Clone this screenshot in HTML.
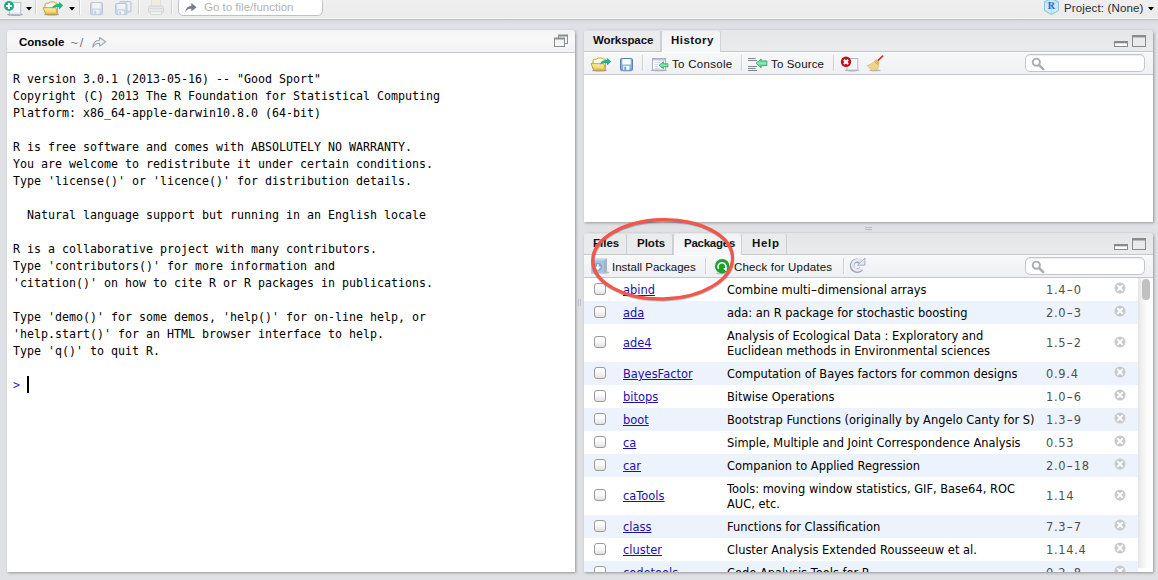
<!DOCTYPE html>
<html><head><meta charset="utf-8">
<style>
*{box-sizing:border-box;margin:0;padding:0}
html,body{width:1158px;height:580px;overflow:hidden}
body{background:#e0e1e4;font-family:"Liberation Sans","DejaVu Sans",sans-serif;font-size:11.5px;color:#000;position:relative}
.abs{position:absolute}
#topbar{left:0;top:0;width:1158px;height:20px;background:linear-gradient(#efeff0,#ebebec);border-bottom:1px solid #bfc0c3}
#topbar:after{content:"";position:absolute;left:0;top:18px;width:100%;height:1px;background:#f6f6f7}
#topshadow{left:0;top:20px;width:1158px;height:5px;background:linear-gradient(#d7d8dc,#e0e1e4)}
.panel{background:#fff;border-radius:4px 4px 0 0;box-shadow:1px 1px 3px rgba(0,0,0,.34)}
.hdr{left:0;top:0;width:100%;background:linear-gradient(#f3f3f5,#f8f8f9 45%,#f1f2f4);border-bottom:1px solid #c4c8cc;border-radius:4px 4px 0 0}
.tabbar{left:0;top:0;width:100%;height:22px;background:linear-gradient(#e5e6e8,#eaebed);border-bottom:1px solid #c4c8cc;border-radius:4px 4px 0 0}
.tab{top:0;height:21px;font-weight:bold;font-size:11.5px;line-height:18px;border-right:1px solid #cdced2;border-top:1px solid #dfe0e3;background:#eaebed;color:#111;border-radius:3px 3px 0 0;white-space:nowrap}
.tab.first{border-radius:4px 3px 0 0}
.tab.sel{background:linear-gradient(#f2f3f5,#f7f8f9);height:23px;border-right:1px solid #cfd2d6;border-left:1px solid #cfd2d6;border-top:1px solid #e6e7ea}
.tbar{left:0;width:100%;height:23px;box-shadow:inset 0 1px 0 #fcfcfd;background:linear-gradient(#f7f8f9,#eff0f3);border-bottom:1px solid #c4c8cc;white-space:nowrap}
.tl{position:absolute;top:5px;line-height:15px;font-size:11.5px;color:#111;white-space:nowrap}
.sep{position:absolute;top:3px;width:1px;height:16px;background:#cfd1d5;box-shadow:1px 0 0 #fafafa}
.search{position:absolute;width:120px;height:18px;border:1px solid #c2c6cb;border-radius:5px;background:#fff;box-shadow:inset 0 1px 1px rgba(0,0,0,.08)}
pre{font-family:"DejaVu Sans Mono","Liberation Mono",monospace;font-size:11.63px;line-height:17px;color:#000}
.list{left:0;top:0;width:554px;height:339px;overflow:hidden;font-family:"DejaVu Sans","Liberation Sans",sans-serif;font-size:11.45px}
.row{left:0;width:554px}
.row.alt{background:#edf3fc}
.row a{color:#1d0fb0;text-decoration:underline;position:absolute;left:39px;line-height:15px}
.row .d{position:absolute;left:143px;width:330px;line-height:15px;white-space:nowrap}
.row .v{position:absolute;left:462px;color:#4f4f4f;line-height:15px;letter-spacing:.7px}
.cb{position:absolute;left:10px;width:12px;height:12px;border:1px solid #9a9a9a;border-radius:3px;background:linear-gradient(#fff 30%,#e2e2e2)}
.x{position:absolute;left:530px}
.h{display:inline-block;transform:scaleX(1.6);margin:0 1.3px}
</style></head><body>
<svg width="0" height="0" style="position:absolute"><defs>
<linearGradient id="gfold" x1="0" y1="0" x2="0" y2="1"><stop offset="0" stop-color="#fdf0b8"/><stop offset="1" stop-color="#e9c452"/></linearGradient>
<linearGradient id="gpage" x1="0" y1="0" x2="1" y2="1"><stop offset="0" stop-color="#fff"/><stop offset="1" stop-color="#eef1f8"/></linearGradient>
<linearGradient id="ggreen" x1="0" y1="0" x2="0" y2="1"><stop offset="0" stop-color="#3fc784"/><stop offset=".5" stop-color="#8eeab8"/><stop offset="1" stop-color="#2fbf76"/></linearGradient>
</defs></svg>

<div id="topbar" class="abs"></div>
<div id="topshadow" class="abs"></div>

<!-- top toolbar icons -->
<svg class="abs" style="left:2px;top:0" width="22" height="17" viewBox="0 0 22 17">
<ellipse cx="13" cy="14.6" rx="8" ry="1.2" fill="#4a5568" opacity=".55"/>
<rect x="7.5" y="2.500" width="11.300" height="11.700" fill="url(#gpage)" stroke="#b9c1d1"/>
<circle cx="7" cy="6" r="5" fill="#1fae84"/>
<path d="M7 3v6M4 6h6" stroke="#fff" stroke-width="2"/>
</svg>
<svg class="abs" style="left:26px;top:7px" width="6" height="4" viewBox="0 0 6 4"><path d="M0 0h6L3 3.5z" fill="#000"/></svg>
<div class="sep" style="left:35px;top:0;height:15px"></div>
<svg class="abs" style="left:42px;top:1px" width="22" height="15" viewBox="0 0 22 15">
<ellipse cx="9.5" cy="13.4" rx="7.5" ry="1.2" fill="#4a5262" opacity=".5"/>
<path d="M3 12V3.2l1.6-1h2.2l1-1.2h4.6l.8 1.2h2.2v9.8z" fill="#fffdf2" stroke="#c9a42c" stroke-width="1" stroke-linejoin="round"/>
<path d="M1 6.7h12.9l1.6 6.4H3.9z" fill="url(#gfold)" stroke="#c9a42c" stroke-width="1" stroke-linejoin="round"/>
<path d="M10.4 6.2c1.2-2.2 3-3.2 6.6-3.2V.8l4.2 3.8L17 8.4V6.1c-2.6-.1-4.4.1-6.6 1.3z" fill="#1fb387"/>
</svg>
<svg class="abs" style="left:69px;top:7px" width="6" height="4" viewBox="0 0 6 4"><path d="M0 0h6L3 3.5z" fill="#000"/></svg>
<div class="sep" style="left:79px;top:0;height:15px"></div>
<svg class="abs" style="left:90px;top:2px;opacity:.34" width="14" height="14" viewBox="0 0 14 14">
<ellipse cx="6.5" cy="12.6" rx="7" ry=".8" fill="#4a5262" opacity=".35"/>
<rect x="0.5" y="0.5" width="12" height="11.6" rx="1.2" fill="#7eb1e8" stroke="#5a7faf"/>
<rect x="2.3" y="1.1" width="8.4" height="5.4" fill="#fff"/>
<rect x="3.2" y="7.8" width="6.2" height="4" fill="#fff"/>
<rect x="4.3" y="8.8" width="1.9" height="3" fill="#5e9be0"/>
</svg>
<svg class="abs" style="left:115px;top:1px;opacity:.34" width="17" height="15" viewBox="0 0 17 15">
<rect x="4.5" y="0.5" width="11.5" height="10.6" rx="1.2" fill="#9cc6ee" stroke="#5a7faf"/>
<rect x="12" y="1.4" width="2.6" height="8" fill="#fff"/>
<rect x="0.5" y="2.5" width="11.5" height="11" rx="1.2" fill="#7eb1e8" stroke="#5a7faf"/>
<rect x="2.2" y="3.1" width="8" height="5" fill="#fff"/>
<rect x="3" y="9.6" width="6" height="3.8" fill="#fff"/>
<rect x="4.1" y="10.5" width="1.8" height="2.9" fill="#5e9be0"/>
</svg>
<div class="sep" style="left:138px;top:0;height:15px"></div>
<svg class="abs" style="left:147px;top:0;opacity:.5" width="18" height="16" viewBox="0 0 18 16">
<rect x="4.5" y="-1" width="9" height="8" fill="#f2ead2" stroke="#ddd3b8"/>
<rect x="1.5" y="6" width="15" height="6.5" rx="1.5" fill="#dfe2e6" stroke="#bcc1c8"/>
<path d="M2.5 8.5h13" stroke="#c3c7cd"/>
<rect x="3.5" y="11.5" width="11" height="3" fill="#f4f5f6" stroke="#c6cad0"/>
</svg>
<div class="sep" style="left:171px;top:0;height:15px"></div>
<div class="abs" style="left:178px;top:-3px;width:145px;height:19px;border:1px solid #bfc1c5;border-radius:5px;background:#fff"></div>
<svg class="abs" style="left:185px;top:2px" width="12" height="11" viewBox="0 0 12 11"><path d="M0.3 10.2C0.8 6 3 4 6.3 4V1L11.6 5.3 6.3 9.6V6.8C3.6 6.6 1.8 7.6.3 10.2z" fill="#7b7e8b"/></svg>
<div class="abs" style="left:204px;top:0;font-size:11.5px;line-height:15px;color:#b3b3b3;white-space:nowrap">Go to file/function</div>

<svg class="abs" style="left:1043px;top:-2px" width="17" height="18" viewBox="0 0 17 18">
<path d="M8.5 1L15.5 3.6V12.6L8.5 16.5 1.5 12.6V3.6z" fill="#cdebf4" stroke="#7ac7dc" stroke-width="1"/>
<path d="M1.5 3.6L8.5 6.4 15.5 3.6M8.5 6.4V16.5" fill="none" stroke="#9fd6e6" stroke-width=".8"/>
<text x="8.3" y="11.2" font-family="Liberation Serif,serif" font-weight="bold" font-size="10" text-anchor="middle" fill="#2b68c9">R</text>
</svg>
<div class="abs" style="left:1064px;top:1px;font-size:11.5px;line-height:15px;color:#2b2b2b;white-space:nowrap;letter-spacing:.15px">Project: (None)</div>
<svg class="abs" style="left:1148px;top:7px" width="6" height="4" viewBox="0 0 6 4"><path d="M0 0h6L3 3.5z" fill="#000"/></svg>

<!-- Console -->
<div class="abs panel" id="console" style="left:7px;top:30px;width:568px;height:542px">
  <div class="abs hdr" style="height:23px"></div>
  <div class="abs" style="left:12px;top:4px;font-weight:bold;font-size:11.5px;line-height:16px">Console</div>
  <div class="abs" style="left:63.500px;top:5px;font-size:13px;line-height:16px;color:#7a7a7a;letter-spacing:1.600px">~/</div>
  <svg class="abs" style="left:85px;top:7px" width="15" height="11" viewBox="0 0 15 11"><path d="M0.800 10.200C1 6 3.400 3.500 7.600 3.300V.5l6.100 4.300-6.100 4.300V6.300C4.600 6.300 2.400 7.400.8 10.200z" fill="#eef1f6" stroke="#a0a6b5" stroke-width="1.100" stroke-linejoin="round"/></svg>
  <svg class="abs" style="left:546px;top:4px" width="16" height="14" viewBox="0 0 16 14">
   <rect x="5.5" y="1.5" width="9" height="8" fill="#f4f5f6" stroke="#8d8d8d"/><path d="M5 1.5h10" stroke="#8d8d8d" stroke-width="2"/>
   <rect x="1.5" y="4.5" width="10" height="8" fill="#f4f5f6" stroke="#8d8d8d"/><path d="M1 4.5h11" stroke="#8d8d8d" stroke-width="2"/>
  </svg>
<pre class="abs" style="left:6px;top:41px">R version 3.0.1 (2013-05-16) -- "Good Sport"
Copyright (C) 2013 The R Foundation for Statistical Computing
Platform: x86_64-apple-darwin10.8.0 (64-bit)

R is free software and comes with ABSOLUTELY NO WARRANTY.
You are welcome to redistribute it under certain conditions.
Type 'license()' or 'licence()' for distribution details.

  Natural language support but running in an English locale

R is a collaborative project with many contributors.
Type 'contributors()' for more information and
'citation()' on how to cite R or R packages in publications.

Type 'demo()' for some demos, 'help()' for on-line help, or
'help.start()' for an HTML browser interface to help.
Type 'q()' to quit R.

<span style="color:#2a2aee">&gt;</span> </pre>
  <div class="abs" style="left:20px;top:346px;width:2px;height:17px;background:#000"></div>
</div>

<!-- Top right -->
<div class="abs panel" id="tr" style="left:584px;top:30px;width:569px;height:192px">
  <div class="abs tabbar"></div>
  <div class="abs tab first" style="left:0;width:77px;padding-left:9px;letter-spacing:-.1px">Workspace</div>
  <div class="abs tab sel" style="left:77px;width:60px;padding-left:9px;letter-spacing:.45px">History</div>
  <svg class="abs" style="left:530px;top:5px" width="33" height="13" viewBox="0 0 33 13">
   <rect x="0.500" y="6.500" width="13" height="5" fill="#fff" stroke="#8a8a8a"/><rect x="0" y="6" width="14" height="2.300" fill="#8a8a8a"/>
   <rect x="18.5" y="1" width="13" height="10.5" fill="#e9eaec" stroke="#8a8a8a"/><path d="M18 1.2h14" stroke="#8a8a8a" stroke-width="2.4"/>
  </svg>
  <div class="abs tbar" style="top:22px">
   <svg class="abs" style="left:6px;top:5px" width="22" height="15" viewBox="0 0 22 15">
<ellipse cx="9.5" cy="13.4" rx="7.5" ry="1.2" fill="#4a5262" opacity=".5"/>
<path d="M3 12V3.2l1.6-1h2.2l1-1.2h4.6l.8 1.2h2.2v9.8z" fill="#fffdf2" stroke="#c9a42c" stroke-width="1" stroke-linejoin="round"/>
<path d="M1 6.7h12.9l1.6 6.4H3.9z" fill="url(#gfold)" stroke="#c9a42c" stroke-width="1" stroke-linejoin="round"/>
<path d="M10.4 6.2c1.2-2.2 3-3.2 6.6-3.2V.8l4.2 3.8L17 8.4V6.1c-2.6-.1-4.4.1-6.6 1.3z" fill="#1fb387"/>
</svg>
   <svg class="abs" style="left:36px;top:6px;opacity:1" width="14" height="14" viewBox="0 0 14 14">
<ellipse cx="6.5" cy="12.6" rx="7" ry=".8" fill="#4a5262" opacity=".35"/>
<rect x="0.5" y="0.5" width="12" height="11.6" rx="1.2" fill="#7eb1e8" stroke="#5a7faf"/>
<rect x="2.3" y="1.1" width="8.4" height="5.4" fill="#fff"/>
<rect x="3.2" y="7.8" width="6.2" height="4" fill="#fff"/>
<rect x="4.3" y="8.8" width="1.9" height="3" fill="#5e9be0"/>
</svg>
   <div class="sep" style="left:58px"></div>
   <svg class="abs" style="left:67px;top:5px" width="18" height="15" viewBox="0 0 18 15">
    <ellipse cx="8" cy="13.4" rx="8.5" ry=".9" fill="#4a5262" opacity=".4"/>
    <rect x="1.5" y="1.5" width="13" height="11.5" fill="#fff" stroke="#a5aec2"/><rect x="2" y="2" width="12" height="1.7" fill="#c3cbdb"/>
    <path d="M3.5 5.5h5.5M3.5 7.5h3.5M3.5 9.5h3.5M3.5 11.5h5.5" stroke="#d3d9e3"/>
    <path d="M8 8.3L12.4 4.9V6.8H16.9V9.8H12.4V11.7z" fill="url(#ggreen)" stroke="#23a55e" stroke-width=".8" stroke-linejoin="round"/>
   </svg>
   <div class="tl" style="left:88px;letter-spacing:.3px">To Console</div>
   <div class="sep" style="left:157px"></div>
   <svg class="abs" style="left:163px;top:5px" width="21" height="15" viewBox="0 0 21 15">
    <path d="M1 1.5h7.5M1 3.5h9M1 9.5h9M1 11.5h7.5M1 13.5h9" stroke="#7d8492" stroke-width="1"/>
    <path d="M9 6.2L14.2 2V3.9H19.9V8.6H14.2V10.7z" fill="url(#ggreen)" stroke="#23a55e" stroke-width=".8" stroke-linejoin="round"/>
   </svg>
   <div class="tl" style="left:187px;letter-spacing:.15px">To Source</div>
   <div class="sep" style="left:249px"></div>
   <svg class="abs" style="left:256px;top:4px" width="20" height="16" viewBox="0 0 20 16">
    <ellipse cx="12" cy="14.4" rx="7" ry="1" fill="#4a5568" opacity=".5"/>
    <rect x="7" y="2.5" width="10.8" height="11.6" fill="url(#gpage)" stroke="#b4bccb"/>
    <circle cx="6" cy="5.8" r="5.2" fill="#b9141b"/>
    <path d="M3.9 3.7l4.2 4.2M8.1 3.7L3.9 7.9" stroke="#fff" stroke-width="2.1"/>
   </svg>
   <svg class="abs" style="left:282px;top:3px" width="18" height="17" viewBox="0 0 18 17">
    <ellipse cx="9" cy="15.3" rx="6" ry=".9" fill="#4a5262" opacity=".4"/>
    <path d="M16.6 1.2L11.6 5.8" stroke="#c0392b" stroke-width="1.8" stroke-linecap="round"/>
    <path d="M10.4 4.4l2.6 2.4c.1 2.2-.4 4.8-1 6.4-.8 1.2-3.6 2.6-5.2 2.2C4.600 14 2.400 12 1.200 10.600 4.600 9.400 8.200 7.200 10.400 4.400z" fill="#ecd68c" stroke="#d2b45c" stroke-width=".6"/>
    <path d="M8.600 6.400l3.400 3.200M9.600 5.400l3.200 3" stroke="#c98f3a" stroke-width=".9"/>
   </svg>
   <div class="search" style="left:441px;top:2px"></div>
   <svg class="abs" style="left:447px;top:5px" width="14" height="14" viewBox="0 0 14 14"><circle cx="5.300" cy="5.200" r="3.600" fill="none" stroke="#a7afb5" stroke-width="1.900"/><path d="M8 8l4.200 4.200" stroke="#a7afb5" stroke-width="2.500" stroke-linecap="round"/></svg>
  </div>
</div>

<!-- Bottom right -->
<div class="abs panel" id="br" style="left:584px;top:233px;width:569px;height:339px;overflow:hidden">
  <div class="abs list">
<div class="abs row" style="top:45px;height:23px">
<span class="cb" style="top:5px"></span><a style="top:5px">abind</a><span class="d" style="top:5px">Combine multi<span class="h">-</span>dimensional arrays</span><span class="v" style="top:5px">1.4<span class="h">-</span>0</span><svg class="x" style="top:4px" width="12" height="12" viewBox="0 0 12 12"><circle cx="6" cy="6" r="5.500" fill="#c6cacd"/><path d="M3.700 3.700L8.300 8.300M8.300 3.700L3.700 8.300" stroke="#fff" stroke-width="1.800" stroke-linecap="round"/></svg>
</div>
<div class="abs row alt" style="top:68px;height:23px">
<span class="cb" style="top:5px"></span><a style="top:5px">ada</a><span class="d" style="top:5px">ada: an R package for stochastic boosting</span><span class="v" style="top:5px">2.0<span class="h">-</span>3</span><svg class="x" style="top:4px" width="12" height="12" viewBox="0 0 12 12"><circle cx="6" cy="6" r="5.500" fill="#c6cacd"/><path d="M3.700 3.700L8.300 8.300M8.300 3.700L3.700 8.300" stroke="#fff" stroke-width="1.800" stroke-linecap="round"/></svg>
</div>
<div class="abs row" style="top:91px;height:38px">
<span class="cb" style="top:12px"></span><a style="top:12px">ade4</a><span class="d" style="top:5px">Analysis of Ecological Data : Exploratory and<br>Euclidean methods in Environmental sciences</span><span class="v" style="top:12px">1.5<span class="h">-</span>2</span><svg class="x" style="top:12px" width="12" height="12" viewBox="0 0 12 12"><circle cx="6" cy="6" r="5.500" fill="#c6cacd"/><path d="M3.700 3.700L8.300 8.300M8.300 3.700L3.700 8.300" stroke="#fff" stroke-width="1.800" stroke-linecap="round"/></svg>
</div>
<div class="abs row alt" style="top:129px;height:23px">
<span class="cb" style="top:5px"></span><a style="top:5px">BayesFactor</a><span class="d" style="top:5px">Computation of Bayes factors for common designs</span><span class="v" style="top:5px">0.9.4</span><svg class="x" style="top:4px" width="12" height="12" viewBox="0 0 12 12"><circle cx="6" cy="6" r="5.500" fill="#c6cacd"/><path d="M3.700 3.700L8.300 8.300M8.300 3.700L3.700 8.300" stroke="#fff" stroke-width="1.800" stroke-linecap="round"/></svg>
</div>
<div class="abs row" style="top:152px;height:23px">
<span class="cb" style="top:5px"></span><a style="top:5px">bitops</a><span class="d" style="top:5px">Bitwise Operations</span><span class="v" style="top:5px">1.0<span class="h">-</span>6</span><svg class="x" style="top:4px" width="12" height="12" viewBox="0 0 12 12"><circle cx="6" cy="6" r="5.500" fill="#c6cacd"/><path d="M3.700 3.700L8.300 8.300M8.300 3.700L3.700 8.300" stroke="#fff" stroke-width="1.800" stroke-linecap="round"/></svg>
</div>
<div class="abs row alt" style="top:175px;height:23px">
<span class="cb" style="top:5px"></span><a style="top:5px">boot</a><span class="d" style="top:5px">Bootstrap Functions (originally by Angelo Canty for S)</span><span class="v" style="top:5px">1.3<span class="h">-</span>9</span><svg class="x" style="top:4px" width="12" height="12" viewBox="0 0 12 12"><circle cx="6" cy="6" r="5.500" fill="#c6cacd"/><path d="M3.700 3.700L8.300 8.300M8.300 3.700L3.700 8.300" stroke="#fff" stroke-width="1.800" stroke-linecap="round"/></svg>
</div>
<div class="abs row" style="top:198px;height:23px">
<span class="cb" style="top:5px"></span><a style="top:5px">ca</a><span class="d" style="top:5px">Simple, Multiple and Joint Correspondence Analysis</span><span class="v" style="top:5px">0.53</span><svg class="x" style="top:4px" width="12" height="12" viewBox="0 0 12 12"><circle cx="6" cy="6" r="5.500" fill="#c6cacd"/><path d="M3.700 3.700L8.300 8.300M8.300 3.700L3.700 8.300" stroke="#fff" stroke-width="1.800" stroke-linecap="round"/></svg>
</div>
<div class="abs row alt" style="top:221px;height:23px">
<span class="cb" style="top:5px"></span><a style="top:5px">car</a><span class="d" style="top:5px">Companion to Applied Regression</span><span class="v" style="top:5px">2.0<span class="h">-</span>18</span><svg class="x" style="top:4px" width="12" height="12" viewBox="0 0 12 12"><circle cx="6" cy="6" r="5.500" fill="#c6cacd"/><path d="M3.700 3.700L8.300 8.300M8.300 3.700L3.700 8.300" stroke="#fff" stroke-width="1.800" stroke-linecap="round"/></svg>
</div>
<div class="abs row" style="top:244px;height:38px">
<span class="cb" style="top:12px"></span><a style="top:12px">caTools</a><span class="d" style="top:5px">Tools: moving window statistics, GIF, Base64, ROC<br>AUC, etc.</span><span class="v" style="top:12px">1.14</span><svg class="x" style="top:12px" width="12" height="12" viewBox="0 0 12 12"><circle cx="6" cy="6" r="5.500" fill="#c6cacd"/><path d="M3.700 3.700L8.300 8.300M8.300 3.700L3.700 8.300" stroke="#fff" stroke-width="1.800" stroke-linecap="round"/></svg>
</div>
<div class="abs row alt" style="top:282px;height:23px">
<span class="cb" style="top:5px"></span><a style="top:5px">class</a><span class="d" style="top:5px">Functions for Classification</span><span class="v" style="top:5px">7.3<span class="h">-</span>7</span><svg class="x" style="top:4px" width="12" height="12" viewBox="0 0 12 12"><circle cx="6" cy="6" r="5.500" fill="#c6cacd"/><path d="M3.700 3.700L8.300 8.300M8.300 3.700L3.700 8.300" stroke="#fff" stroke-width="1.800" stroke-linecap="round"/></svg>
</div>
<div class="abs row" style="top:305px;height:23px">
<span class="cb" style="top:5px"></span><a style="top:5px">cluster</a><span class="d" style="top:5px">Cluster Analysis Extended Rousseeuw et al.</span><span class="v" style="top:5px">1.14.4</span><svg class="x" style="top:4px" width="12" height="12" viewBox="0 0 12 12"><circle cx="6" cy="6" r="5.500" fill="#c6cacd"/><path d="M3.700 3.700L8.300 8.300M8.300 3.700L3.700 8.300" stroke="#fff" stroke-width="1.800" stroke-linecap="round"/></svg>
</div>
<div class="abs row alt" style="top:328px;height:23px">
<span class="cb" style="top:5px"></span><a style="top:5px">codetools</a><span class="d" style="top:5px">Code Analysis Tools for R</span><span class="v" style="top:5px">0.2<span class="h">-</span>8</span><svg class="x" style="top:4px" width="12" height="12" viewBox="0 0 12 12"><circle cx="6" cy="6" r="5.500" fill="#c6cacd"/><path d="M3.700 3.700L8.300 8.300M8.300 3.700L3.700 8.300" stroke="#fff" stroke-width="1.800" stroke-linecap="round"/></svg>
</div>
  </div>
  <div class="abs" style="left:554px;top:45px;width:15px;height:290px;background:linear-gradient(90deg,#e4e4e4,#f1f1f1 25%,#fbfbfb 60%,#fff)"></div>
  <div class="abs" style="left:558px;top:46px;width:8px;height:21px;border-radius:4px;background:#c1c1c1"></div>
  <div class="abs tabbar"></div>
  <div class="abs tab first" style="left:0;width:43px;padding-left:9px">Files</div>
  <div class="abs tab" style="left:43px;width:46px;padding-left:10px">Plots</div>
  <div class="abs tab sel" style="left:89px;width:69px;padding-left:10px;letter-spacing:-.25px">Packages</div>
  <div class="abs tab" style="left:158px;width:45px;padding-left:10px;letter-spacing:.7px">Help</div>
  <svg class="abs" style="left:530px;top:5px" width="33" height="13" viewBox="0 0 33 13">
   <rect x="0.500" y="6.500" width="13" height="5" fill="#fff" stroke="#8a8a8a"/><rect x="0" y="6" width="14" height="2.300" fill="#8a8a8a"/>
   <rect x="18.5" y="1" width="13" height="10.5" fill="#e9eaec" stroke="#8a8a8a"/><path d="M18 1.2h14" stroke="#8a8a8a" stroke-width="2.4"/>
  </svg>
  <div class="abs tbar" style="top:22px">
   <svg class="abs" style="left:6px;top:2px" width="19" height="18" viewBox="0 0 19 18">
    <ellipse cx="15" cy="15.600" rx="4" ry="1" fill="#4a5262" opacity=".35"/>
    <path d="M1.200 3.400L4.200 1.300h12.700v13.200L14 16.600H1.200z" fill="#c9d8ea"/>
    <path d="M14 3.400L16.900 1.300v13.200L14 16.600z" fill="#9db4d1"/>
    <path d="M1.200 3.400h12.800V16.600H1.200z" fill="#abc1dc"/>
    <circle cx="7.900" cy="9.900" r="4.200" fill="#8ba5c6"/><path d="M7.900 7.200v4.600M5.700 9.800l2.200 2.400 2.200-2.400" stroke="#fff" stroke-width="1.500" fill="none"/>
   </svg>
   <div class="tl" style="left:28px">Install Packages</div>
   <div class="sep" style="left:121px"></div>
   <svg class="abs" style="left:130px;top:3px" width="17" height="17" viewBox="0 0 17 17">
    <ellipse cx="7" cy="15.3" rx="5" ry=".9" fill="#4a5262" opacity=".35"/>
    <circle cx="8.2" cy="8.200" r="7.25" fill="#18a52c"/>
    <path d="M4.6 10.800A4 4 0 1 1 11.800 10" fill="none" stroke="#fff" stroke-width="1.5"/><path d="M9.200 10.600l4-1.400-.8 4.200z" fill="#fff"/>
   </svg>
   <div class="tl" style="left:150px;letter-spacing:.17px">Check for Updates</div>
   <div class="sep" style="left:259px"></div>
   <svg class="abs" style="left:265px;top:2px" width="17" height="17" viewBox="0 0 17 17">
    <path d="M11.310 4.870A5 5 0 1 0 12.200 11.570" fill="none" stroke="#9ca5ba" stroke-width="4.600"/>
    <path d="M15.900 1V8.200H8.500z" fill="#e4ebf6" stroke="#9ca5ba" stroke-width=".9" stroke-linejoin="round"/>
    <path d="M11.800 4.400A5 5 0 1 0 12.200 11.570" fill="none" stroke="#e4ebf6" stroke-width="2.900"/>
   </svg>
   <div class="search" style="left:441px;top:2px"></div>
   <svg class="abs" style="left:447px;top:5px" width="14" height="14" viewBox="0 0 14 14"><circle cx="5.300" cy="5.200" r="3.600" fill="none" stroke="#a7afb5" stroke-width="1.900"/><path d="M8 8l4.200 4.200" stroke="#a7afb5" stroke-width="2.500" stroke-linecap="round"/></svg>
  </div>
</div>

<!-- splitter grip -->
<div class="abs" style="left:865px;top:227px;width:7px;height:1px;background:#b6bac8;box-shadow:0 2px 0 #b6bac8"></div>
<div class="abs" style="left:578px;top:299px;width:1px;height:7px;background:#bfc3cf;box-shadow:2px 0 0 #bfc3cf"></div>

<!-- red ellipse annotation -->
<svg class="abs" style="left:580px;top:205px" width="170" height="110" viewBox="580 205 170 110">
<defs><filter id="eb" x="-10%" y="-10%" width="120%" height="120%"><feGaussianBlur stdDeviation=".7"/></filter></defs>
<g transform="rotate(-1.500 662.600 259.300)">
<ellipse cx="662.900" cy="260.200" rx="69.900" ry="39.600" fill="none" stroke="#1c2a2a" stroke-opacity=".4" stroke-width="3.200" filter="url(#eb)"/>
<ellipse cx="662.600" cy="259.300" rx="69.900" ry="39.600" fill="none" stroke="#f6554a" stroke-width="3.200"/>
</g>
</svg>
</body></html>
